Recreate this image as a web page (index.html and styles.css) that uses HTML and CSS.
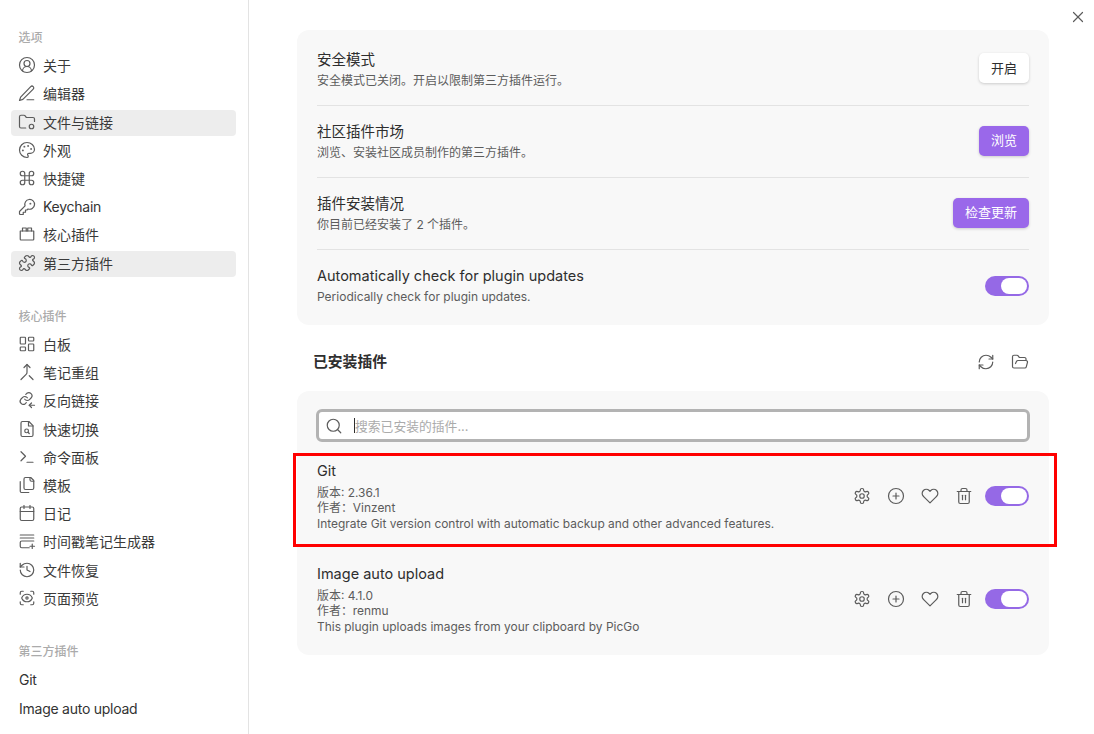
FILE: index.html
```html
<!DOCTYPE html>
<html lang="zh-CN">
<head>
    <meta charset="UTF-8">
    <title>设置</title>
    <link rel="stylesheet" href="styles.css">
</head>
<body>
    <svg class="sprites" width="0" height="0">
        <symbol id="i-user" viewBox="0 0 24 24"><path d="M18 20a6 6 0 0 0-12 0"/><circle cx="12" cy="10" r="4"/><circle cx="12" cy="12" r="10"/></symbol>
        <symbol id="i-pen" viewBox="0 0 24 24"><path d="M12 21h9"/><path d="M17 3.5a2.3 2.3 0 0 1 3.3 3.3L6.5 20.5 2 22l1.5-4.5Z"/></symbol>
        <symbol id="i-folder" viewBox="0 0 24 24"><path d="M10.3 20H4a2 2 0 0 1-2-2V5a2 2 0 0 1 2-2h3.9a2 2 0 0 1 1.69.9l.81 1.2a2 2 0 0 0 1.67.9H20a2 2 0 0 1 2 2v3.3"/><circle cx="18" cy="18" r="3"/></symbol>
        <symbol id="i-palette" viewBox="0 0 24 24"><circle cx="13.5" cy="6.5" r=".5"/><circle cx="17.5" cy="10.5" r=".5"/><circle cx="8.5" cy="7.5" r=".5"/><circle cx="6.5" cy="12.5" r=".5"/><path d="M12 2C6.5 2 2 6.5 2 12s4.5 10 10 10c.926 0 1.648-.746 1.648-1.688 0-.437-.18-.835-.437-1.125-.29-.289-.438-.652-.438-1.125a1.64 1.64 0 0 1 1.668-1.668h1.996c3.051 0 5.555-2.503 5.555-5.554C21.965 6.012 17.461 2 12 2z"/></symbol>
        <symbol id="i-command" viewBox="0 0 24 24"><path d="M18 3a3 3 0 0 0-3 3v12a3 3 0 0 0 3 3 3 3 0 0 0 3-3 3 3 0 0 0-3-3H6a3 3 0 0 0-3 3 3 3 0 0 0 3 3 3 3 0 0 0 3-3V6a3 3 0 0 0-3-3 3 3 0 0 0-3 3 3 3 0 0 0 3 3h12a3 3 0 0 0 3-3 3 3 0 0 0-3-3z"/></symbol>
        <symbol id="i-key" viewBox="0 0 24 24"><path d="M2 18v3c0 .6.4 1 1 1h4v-3h3v-3h2l1.4-1.4a6.5 6.5 0 1 0-4-4Z"/><circle cx="16.5" cy="7.5" r=".5"/></symbol>
        <symbol id="i-box" viewBox="0 0 24 24"><path d="M3 8h18v11a1 1 0 0 1-1 1H4a1 1 0 0 1-1-1Z"/><path d="M6 8V4h5v4"/><path d="M13 8V4h5v4"/></symbol>
        <symbol id="i-puzzle" viewBox="0 0 24 24"><path d="M19.439 7.85c-.049.322.059.648.289.878l1.568 1.568c.47.47.706 1.087.706 1.704s-.235 1.233-.706 1.704l-1.611 1.611a.98.98 0 0 1-.837.276c-.47-.07-.802-.48-.968-.925a2.501 2.501 0 1 0-3.214 3.214c.446.166.855.497.925.968a.979.979 0 0 1-.276.837l-1.61 1.61a2.404 2.404 0 0 1-1.705.707 2.402 2.402 0 0 1-1.704-.706l-1.568-1.568a1.026 1.026 0 0 0-.877-.29c-.493.074-.84.504-1.02.968a2.5 2.5 0 1 1-3.237-3.237c.464-.18.894-.527.967-1.02a1.026 1.026 0 0 0-.289-.877l-1.568-1.568A2.402 2.402 0 0 1 1.998 12c0-.617.236-1.234.706-1.704L4.23 8.77c.24-.24.581-.353.917-.303.515.077.877.528 1.073 1.01a2.5 2.5 0 1 0 3.259-3.259c-.482-.196-.933-.558-1.01-1.073-.05-.336.062-.676.303-.917l1.525-1.525A2.402 2.402 0 0 1 12 1.998c.617 0 1.234.236 1.704.706l1.568 1.568c.23.23.556.338.877.29.493-.074.84-.504 1.02-.968a2.5 2.5 0 1 1 3.237 3.237c-.464.18-.894.527-.967 1.02Z"/></symbol>
        <symbol id="i-board" viewBox="0 0 24 24"><rect x="3" y="3" width="7" height="9" rx="1"/><rect x="14" y="3" width="7" height="5" rx="1"/><rect x="14" y="12" width="7" height="9" rx="1"/><rect x="3" y="16" width="7" height="5" rx="1"/></symbol>
        <symbol id="i-merge" viewBox="0 0 24 24"><path d="m8 6 4-4 4 4"/><path d="M12 2v10.3a4 4 0 0 1-1.172 2.872L4 22"/><path d="m20 22-5-5"/></symbol>
        <symbol id="i-backlink" viewBox="0 0 24 24"><path d="M9 11a4.2 4.2 0 0 0 6.3.4l2.4-2.4a4.2 4.2 0 0 0-5.9-5.9l-1.4 1.4"/><path d="M12.5 9a4.2 4.2 0 0 0-6.3-.4l-2.4 2.4a4.2 4.2 0 0 0 5.9 5.9l1.4-1.4"/><path d="m18 16-3 3 3 3"/><path d="M15 19h7"/></symbol>
        <symbol id="i-filesearch" viewBox="0 0 24 24"><path d="M14.5 2H6a2 2 0 0 0-2 2v16a2 2 0 0 0 2 2h12a2 2 0 0 0 2-2V7.5L14.5 2z"/><path d="M14 2v6h6"/><circle cx="11.5" cy="14.5" r="2.5"/><path d="M13.3 16.3 15 18"/></symbol>
        <symbol id="i-terminal" viewBox="0 0 24 24"><path d="m4 17 6-6-6-6"/><path d="M12 19h8"/></symbol>
        <symbol id="i-files" viewBox="0 0 24 24"><path d="M21 7h-3a2 2 0 0 1-2-2V2"/><path d="M21 6v10a2 2 0 0 1-2 2H10a2 2 0 0 1-2-2V4a2 2 0 0 1 2-2h7Z"/><path d="M3 7.6v12.8A1.6 1.6 0 0 0 4.6 22h9.8"/></symbol>
        <symbol id="i-calendar" viewBox="0 0 24 24"><rect x="3" y="4" width="18" height="18" rx="2"/><path d="M16 2v4"/><path d="M8 2v4"/><path d="M3 10h18"/></symbol>
        <symbol id="i-stack" viewBox="0 0 24 24"><path d="M3 4h18"/><path d="M3 8h18"/><path d="M21 12H5a2 2 0 0 0-2 2v5a2 2 0 0 0 2 2h10"/><path d="M19 16v6"/><path d="M16 19h6"/></symbol>
        <symbol id="i-history" viewBox="0 0 24 24"><path d="M3 12a9 9 0 1 0 9-9 9.75 9.75 0 0 0-6.74 2.74L3 8"/><path d="M3 3v5h5"/><path d="M12 7v5l4 2"/></symbol>
        <symbol id="i-scan" viewBox="0 0 24 24"><path d="M3 7V5a2 2 0 0 1 2-2h2"/><path d="M17 3h2a2 2 0 0 1 2 2v2"/><path d="M21 17v2a2 2 0 0 1-2 2h-2"/><path d="M7 21H5a2 2 0 0 1-2-2v-2"/><circle cx="12" cy="12" r="1.5"/><path d="M18.944 12.33a1 1 0 0 0 0-.66 7.5 7.5 0 0 0-13.888 0 1 1 0 0 0 0 .66 7.5 7.5 0 0 0 13.888 0"/></symbol>
        <symbol id="i-refresh" viewBox="0 0 24 24"><path d="M3 12a9 9 0 0 1 9-9 9.75 9.75 0 0 1 6.74 2.74L21 8"/><path d="M21 3v5h-5"/><path d="M21 12a9 9 0 0 1-9 9 9.75 9.75 0 0 1-6.74-2.74L3 16"/><path d="M8 16H3v5"/></symbol>
        <symbol id="i-open" viewBox="0 0 24 24"><path d="m6 14 1.45-2.9A2 2 0 0 1 9.24 10H20a2 2 0 0 1 1.94 2.5l-1.55 6a2 2 0 0 1-1.94 1.5H4a2 2 0 0 1-2-2V5c0-1.1.9-2 2-2h3.93a2 2 0 0 1 1.66.9l.82 1.2a2 2 0 0 0 1.66.9H18a2 2 0 0 1 2 2v2"/></symbol>
        <symbol id="i-gear" viewBox="0 0 24 24"><path d="M12.22 2h-.44a2 2 0 0 0-2 2v.18a2 2 0 0 1-1 1.73l-.43.25a2 2 0 0 1-2 0l-.15-.08a2 2 0 0 0-2.73.73l-.22.38a2 2 0 0 0 .73 2.73l.15.1a2 2 0 0 1 1 1.72v.51a2 2 0 0 1-1 1.74l-.15.09a2 2 0 0 0-.73 2.73l.22.38a2 2 0 0 0 2.73.73l.15-.08a2 2 0 0 1 2 0l.43.25a2 2 0 0 1 1 1.73V20a2 2 0 0 0 2 2h.44a2 2 0 0 0 2-2v-.18a2 2 0 0 1 1-1.73l.43-.25a2 2 0 0 1 2 0l.15.08a2 2 0 0 0 2.73-.73l.22-.39a2 2 0 0 0-.73-2.73l-.15-.08a2 2 0 0 1-1-1.74v-.5a2 2 0 0 1 1-1.74l.15-.09a2 2 0 0 0 .73-2.73l-.22-.38a2 2 0 0 0-2.73-.73l-.15.08a2 2 0 0 1-2 0l-.43-.25a2 2 0 0 1-1-1.73V4a2 2 0 0 0-2-2z"/><circle cx="12" cy="12" r="3"/></symbol>
        <symbol id="i-plus" viewBox="0 0 24 24"><circle cx="12" cy="12" r="10"/><path d="M8 12h8"/><path d="M12 8v8"/></symbol>
        <symbol id="i-heart" viewBox="0 0 24 24"><path d="M20.84 4.61a5.5 5.5 0 0 0-7.78 0L12 5.67l-1.06-1.06a5.5 5.5 0 0 0-7.78 7.78l1.06 1.06L12 21.23l7.78-7.78 1.06-1.06a5.5 5.5 0 0 0 0-7.78z"/></symbol>
        <symbol id="i-trash" viewBox="0 0 24 24"><path d="M3 6h18"/><path d="M19 6v14c0 1-1 2-2 2H7c-1 0-2-1-2-2V6"/><path d="M8 6V4c0-1 1-2 2-2h4c1 0 2 1 2 2v2"/><path d="M10 11v6"/><path d="M14 11v6"/></symbol>
        <symbol id="i-search" viewBox="0 0 24 24"><circle cx="11" cy="11" r="8"/><path d="m21 21-4.3-4.3"/></symbol>
        <symbol id="i-close" viewBox="0 0 24 24"><path d="M18 6 6 18"/><path d="m6 6 12 12"/></symbol>
    </svg>

    <div class="window">
        <aside class="sidebar">
            <div class="nav-title">选项</div>
            <nav class="nav-group">
                <a class="nav-item"><svg class="icon"><use href="#i-user"/></svg>关于</a>
                <a class="nav-item"><svg class="icon"><use href="#i-pen"/></svg>编辑器</a>
                <a class="nav-item active"><svg class="icon"><use href="#i-folder"/></svg>文件与链接</a>
                <a class="nav-item"><svg class="icon"><use href="#i-palette"/></svg>外观</a>
                <a class="nav-item"><svg class="icon"><use href="#i-command"/></svg>快捷键</a>
                <a class="nav-item latin"><svg class="icon"><use href="#i-key"/></svg>Keychain</a>
                <a class="nav-item"><svg class="icon"><use href="#i-box"/></svg>核心插件</a>
                <a class="nav-item active"><svg class="icon"><use href="#i-puzzle"/></svg>第三方插件</a>
            </nav>
            <div class="nav-title">核心插件</div>
            <nav class="nav-group">
                <a class="nav-item"><svg class="icon"><use href="#i-board"/></svg>白板</a>
                <a class="nav-item"><svg class="icon"><use href="#i-merge"/></svg>笔记重组</a>
                <a class="nav-item"><svg class="icon"><use href="#i-backlink"/></svg>反向链接</a>
                <a class="nav-item"><svg class="icon"><use href="#i-filesearch"/></svg>快速切换</a>
                <a class="nav-item"><svg class="icon"><use href="#i-terminal"/></svg>命令面板</a>
                <a class="nav-item"><svg class="icon"><use href="#i-files"/></svg>模板</a>
                <a class="nav-item"><svg class="icon"><use href="#i-calendar"/></svg>日记</a>
                <a class="nav-item"><svg class="icon"><use href="#i-stack"/></svg>时间戳笔记生成器</a>
                <a class="nav-item"><svg class="icon"><use href="#i-history"/></svg>文件恢复</a>
                <a class="nav-item"><svg class="icon"><use href="#i-scan"/></svg>页面预览</a>
            </nav>
            <div class="nav-title">第三方插件</div>
            <nav class="nav-group">
                <a class="nav-item latin plain">Git</a>
                <a class="nav-item latin plain">Image auto upload</a>
            </nav>
        </aside>

        <main class="content">
            <button class="close-btn" aria-label="关闭"><svg class="icon"><use href="#i-close"/></svg></button>

            <section class="card settings">
                <div class="setting-row">
                    <div class="setting-info">
                        <div class="setting-name">安全模式</div>
                        <div class="setting-desc">安全模式已关闭。开启以限制第三方插件运行。</div>
                    </div>
                    <button class="btn">开启</button>
                </div>
                <div class="setting-row">
                    <div class="setting-info">
                        <div class="setting-name">社区插件市场</div>
                        <div class="setting-desc">浏览、安装社区成员制作的第三方插件。</div>
                    </div>
                    <button class="btn primary">浏览</button>
                </div>
                <div class="setting-row">
                    <div class="setting-info">
                        <div class="setting-name">插件安装情况</div>
                        <div class="setting-desc">你目前已经安装了 2 个插件。</div>
                    </div>
                    <button class="btn primary">检查更新</button>
                </div>
                <div class="setting-row">
                    <div class="setting-info">
                        <div class="setting-name">Automatically check for plugin updates</div>
                        <div class="setting-desc">Periodically check for plugin updates.</div>
                    </div>
                    <div class="toggle"></div>
                </div>
            </section>

            <div class="section-head">
                <h2>已安装插件</h2>
                <div class="section-actions">
                    <svg class="icon"><use href="#i-refresh"/></svg>
                    <svg class="icon"><use href="#i-open"/></svg>
                </div>
            </div>

            <section class="card plugins">
                <div class="search">
                    <svg class="icon"><use href="#i-search"/></svg>
                    <span class="caret"></span>
                    <span class="placeholder">搜索已安装的插件...</span>
                </div>

                <div class="plugin-row marked">
                    <div class="plugin-info">
                        <div class="plugin-name">Git</div>
                        <div class="plugin-meta">版本: 2.36.1</div>
                        <div class="plugin-meta">作者：Vinzent</div>
                        <div class="plugin-meta">Integrate Git version control with automatic backup and other advanced features.</div>
                    </div>
                    <div class="plugin-actions">
                        <svg class="icon"><use href="#i-gear"/></svg>
                        <svg class="icon"><use href="#i-plus"/></svg>
                        <svg class="icon"><use href="#i-heart"/></svg>
                        <svg class="icon"><use href="#i-trash"/></svg>
                        <div class="toggle"></div>
                    </div>
                </div>

                <div class="plugin-row">
                    <div class="plugin-info">
                        <div class="plugin-name">Image auto upload</div>
                        <div class="plugin-meta">版本: 4.1.0</div>
                        <div class="plugin-meta">作者：renmu</div>
                        <div class="plugin-meta">This plugin uploads images from your clipboard by PicGo</div>
                    </div>
                    <div class="plugin-actions">
                        <svg class="icon"><use href="#i-gear"/></svg>
                        <svg class="icon"><use href="#i-plus"/></svg>
                        <svg class="icon"><use href="#i-heart"/></svg>
                        <svg class="icon"><use href="#i-trash"/></svg>
                        <div class="toggle"></div>
                    </div>
                </div>
            </section>
        </main>
    </div>
</body>
</html>
```

FILE: styles.css
```css
* {
    box-sizing: border-box;
}

html, body {
    margin: 0;
    height: 100%;
    overflow: hidden;
}

body {
    font-family: Inter, "Noto Sans CJK SC", sans-serif;
    background-color: #fff;
    color: #2e2e2e;
}

.sprites {
    position: absolute;
}

.icon {
    width: 18px;
    height: 18px;
    flex: none;
    fill: none;
    stroke: #5c5c5c;
    stroke-width: 1.6;
    stroke-linecap: round;
    stroke-linejoin: round;
}

.window {
    display: flex;
    height: 100%;
}

/* Sidebar */
.sidebar {
    width: 249px;
    flex: none;
    padding: 28px 12px 0 11px;
    border-right: 1px solid #e3e3e3;
}

.nav-title {
    height: 20px;
    margin-bottom: 5.7px;
    padding-left: 7.5px;
    font-size: 12px;
    line-height: 20px;
    font-weight: 500;
    color: #ababab;
}

.nav-group {
    margin-bottom: 29.9px;
}

.nav-item {
    display: flex;
    align-items: center;
    gap: 7px;
    height: 26px;
    margin-bottom: 2.2px;
    padding: 0 7px 3px 7px;
    border-radius: 4px;
    font-size: 14px;
    color: #3a3a3a;
}

.nav-item.active {
    background-color: #ededed;
}

.nav-item.latin {
    padding-bottom: 2px;
    letter-spacing: -0.25px;
    color: #333;
}

.nav-item.plain {
    padding-left: 8px;
}

/* Content */
.content {
    position: relative;
    flex: 1;
    padding: 30px 45px 0 48px;
}

.close-btn {
    position: absolute;
    top: 8px;
    right: 7px;
    width: 18px;
    height: 18px;
    padding: 0;
    border: none;
    background: none;
}

.card {
    background-color: #f8f8f8;
    border-radius: 12px;
}

.settings {
    padding: 3px 20px 4px;
}

.setting-row {
    display: flex;
    align-items: center;
    justify-content: space-between;
    height: 72px;
    border-top: 1px solid #e3e3e3;
}

.setting-row:first-child {
    border-top: none;
}

.setting-name {
    font-size: 14.5px;
    line-height: 18px;
    color: #2e2e2e;
}

.setting-desc {
    margin-top: 4px;
    font-size: 12px;
    line-height: 15px;
    color: #5c5c5c;
}

.btn {
    height: 30px;
    margin-top: -2px;
    padding: 0 12px 2px;
    border: none;
    border-radius: 5px;
    background-color: #fff;
    box-shadow: 0 1px 3px rgba(0, 0, 0, 0.18);
    font-family: inherit;
    font-size: 13px;
    color: #2e2e2e;
}

.btn.primary {
    background-color: #9a68ea;
    color: #fff;
}

.toggle {
    position: relative;
    width: 44px;
    height: 20px;
    flex: none;
    border-radius: 10px;
    background-color: #9569e6;
}

.toggle::after {
    content: "";
    position: absolute;
    top: 2px;
    right: 2px;
    width: 26px;
    height: 16px;
    border-radius: 8px;
    background-color: #fff;
}

.section-head {
    display: flex;
    align-items: center;
    justify-content: space-between;
    height: 66px;
    padding: 8px 20px 0 16px;
}

.section-head h2 {
    margin: -4px 0 0;
    font-size: 14.8px;
    font-weight: 600;
    color: #2e2e2e;
}

.section-actions {
    display: flex;
    gap: 16px;
}

.plugins {
    padding: 18px 20px 5px;
}

.search {
    display: flex;
    align-items: center;
    height: 33px;
    margin: 0 -1px;
    padding-left: 6px;
    border: 3px solid #b3b3b3;
    border-radius: 6px;
    background-color: #fff;
}

.search .caret {
    width: 1px;
    height: 15px;
    margin-left: 11px;
    background-color: #2e2e2e;
}

.placeholder {
    font-size: 12.8px;
    color: #ababab;
}

.plugin-row {
    position: relative;
    display: flex;
    align-items: center;
    justify-content: space-between;
    height: 103px;
}

.plugin-row:nth-of-type(2) {
    margin-top: 2px;
}

.marked::after {
    content: "";
    position: absolute;
    top: 9px;
    bottom: 0;
    left: -24px;
    right: -28px;
    border: 3px solid #f00;
}

.plugin-name {
    margin: 1px 0 4px;
    font-size: 14.5px;
    line-height: 20px;
    color: #2e2e2e;
}

.plugin-meta {
    font-size: 11.95px;
    line-height: 15.5px;
    color: #5c5c5c;
}

.plugin-actions {
    display: flex;
    align-items: center;
    gap: 16px;
}

.plugin-actions .toggle {
    margin-left: -4px;
}
```
